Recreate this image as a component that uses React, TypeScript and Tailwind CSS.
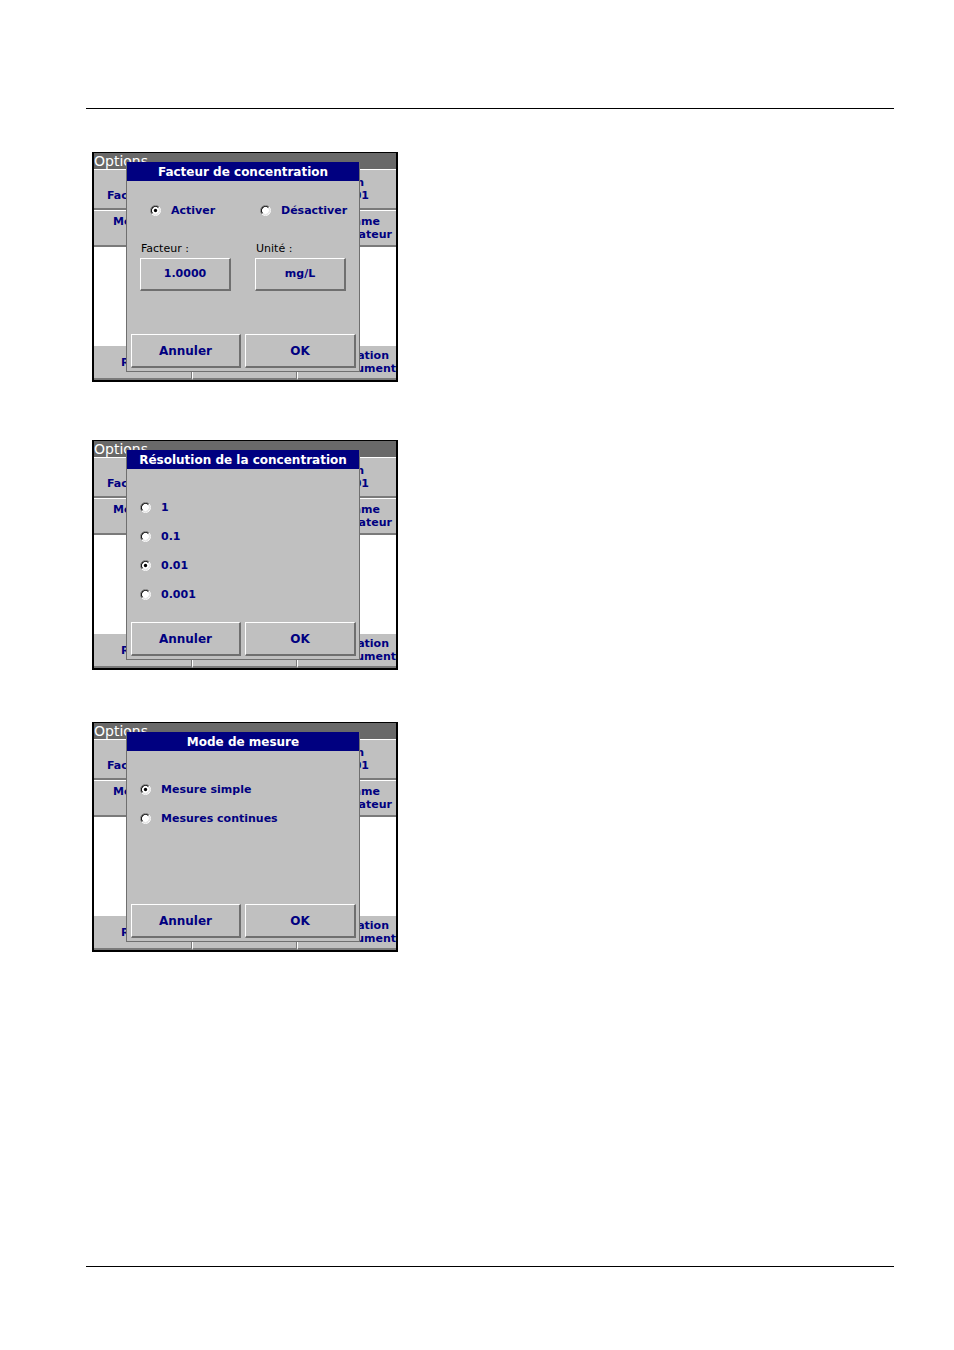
import type { ReactNode } from "react";

const font = "font-['DejaVu_Sans',sans-serif]";
const bevel =
  "flex items-center justify-center bg-[#c0c0c0] border-t border-l border-white border-b-2 border-r-2 border-b-[#6f6f6f] border-r-[#6f6f6f]";

function Radio({ checked = false }: { checked?: boolean }) {
  return (
    <svg width="11" height="11" viewBox="0 0 12 12" className="shrink-0">
      <circle cx="6" cy="6" r="5" fill="#ffffff" />
      <path d="M2.11 9.89 A5.5 5.5 0 0 1 9.89 2.11" fill="none" stroke="#808080" strokeWidth="1" />
      <path d="M2.82 9.18 A4.5 4.5 0 0 1 9.18 2.82" fill="none" stroke="#000000" strokeWidth="1.2" />
      <path d="M9.89 2.11 A5.5 5.5 0 0 1 2.11 9.89" fill="none" stroke="#ffffff" strokeWidth="1" />
      <path d="M9.18 2.82 A4.5 4.5 0 0 1 2.82 9.18" fill="none" stroke="#dcdcdc" strokeWidth="1" />
      {checked && <circle cx="6" cy="6" r="1.8" fill="#000000" />}
    </svg>
  );
}

function Option({ label, checked }: { label: string; checked?: boolean }) {
  return (
    <div className="flex h-[13px] items-center gap-[10px]">
      <Radio checked={checked} />
      <span className="text-[11px] font-bold leading-[13px] text-[#000080]">{label}</span>
    </div>
  );
}

function Dialog({ title, children }: { title: string; children: ReactNode }) {
  return (
    <div className="absolute left-[32px] top-[9px] flex h-[210px] w-[234px] flex-col border-x border-b border-[#6f6f6f] bg-[#c0c0c0]">
      <div className="flex h-[19px] shrink-0 items-center justify-center bg-[#000080] text-[12px] font-bold text-white">
        {title}
      </div>
      {children}
      <div className="mb-[3px] mt-auto flex gap-[4px] pl-[4px]">
        <div className={`${bevel} h-[34px] w-[110px] text-[12px] font-bold text-[#000080]`}>Annuler</div>
        <div className={`${bevel} h-[34px] w-[111px] text-[12px] font-bold text-[#000080]`}>OK</div>
      </div>
    </div>
  );
}

function Screen({ className, children }: { className: string; children: ReactNode }) {
  const key =
    "flex flex-col justify-center bg-[#c0c0c0] border-t border-white border-b-2 border-b-[#7a7a7a] text-[11px] font-bold leading-[13px] text-[#000080] whitespace-nowrap";
  return (
    <div className={`relative ml-[92px] flex h-[230px] w-[306px] flex-col border-x-2 border-b-2 border-t border-black ${className}`}>
      <div className="h-[16px] bg-[#696969] text-[14px] leading-[16px] text-white">Options</div>
      <div className="grid h-[41px] grid-cols-2">
        <div className={key}>
          <div className="pl-[44px]">Dilution</div>
          <div className="pl-[13px]">Facteur conc.</div>
        </div>
        <div className={key}>
          <div className="pr-[32px] text-right">Résolution</div>
          <div className="pr-[27px] text-right">0.01</div>
        </div>
      </div>
      <div className="grid h-[37px] grid-cols-2">
        <div className={key}>
          <div className="pl-[19px]">Mesure</div>
          <div className="pl-[50px]">Simple</div>
        </div>
        <div className={key}>
          <div className="pr-[16px] text-right">Programme</div>
          <div className="pr-[4px] text-right">utilisateur</div>
        </div>
      </div>
      <div className="h-[98px] bg-white" />
      <div className="grid h-[35px] grid-cols-[98px_105px_99px]">
        <div className={`${key} border-r border-r-[#7a7a7a]`}>
          <div className="pl-[27px]">Rappel</div>
        </div>
        <div className={`${key} border-l border-r border-l-white border-r-[#7a7a7a]`} />
        <div className={`${key} border-l border-l-white`}>
          <div className="pr-[7px] text-right">Information</div>
          <div className="text-right">instrument</div>
        </div>
      </div>
      {children}
    </div>
  );
}

export default function App() {
  return (
    <div className={`flex h-[1350px] w-[954px] flex-col bg-white ${font}`}>
      <div className="ml-[86px] mr-[60px] mt-[108px] h-px bg-black" />

      <Screen className="mt-[43px]">
        <Dialog title="Facteur de concentration">
          <div className="mt-[23px] grid h-[11px] grid-cols-[110px_auto] items-center pl-[23px]">
            <Option label="Activer" checked />
            <Option label="Désactiver" />
          </div>
          <div className="mt-[27px] grid h-[13px] grid-cols-[115px_auto] pl-[14px] text-[11px] leading-[13px] text-black">
            <span>Facteur :</span>
            <span>Unité :</span>
          </div>
          <div className="mt-[3px] flex gap-[24px] pl-[13px]">
            <div className={`${bevel} h-[33px] w-[91px] text-[11px] font-bold text-[#000080]`}>1.0000</div>
            <div className={`${bevel} h-[33px] w-[91px] text-[11px] font-bold text-[#000080]`}>mg/L</div>
          </div>
        </Dialog>
      </Screen>

      <Screen className="mt-[58px]">
        <Dialog title="Résolution de la concentration">
          <div className="mt-[32px] flex flex-col gap-[16px] pl-[13px]">
            <Option label="1" />
            <Option label="0.1" />
            <Option label="0.01" checked />
            <Option label="0.001" />
          </div>
        </Dialog>
      </Screen>

      <Screen className="mt-[52px]">
        <Dialog title="Mode de mesure">
          <div className="mt-[32px] flex flex-col gap-[16px] pl-[13px]">
            <Option label="Mesure simple" checked />
            <Option label="Mesures continues" />
          </div>
        </Dialog>
      </Screen>

      <div className="ml-[86px] mr-[60px] mt-[314px] h-px bg-black" />
    </div>
  );
}
